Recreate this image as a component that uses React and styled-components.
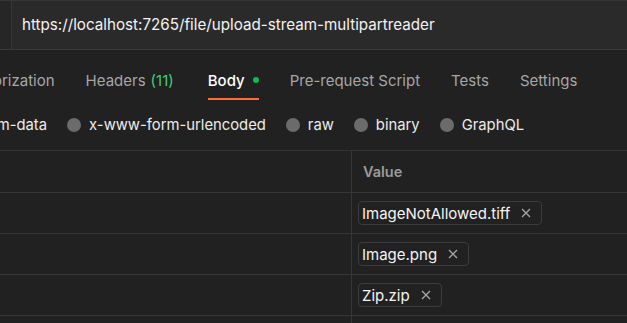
import React from 'react';
import styled, { createGlobalStyle } from 'styled-components';

const GlobalStyle = createGlobalStyle`
  body {
    margin: 0;
    background: #212121;
    font-family: Inter, "Noto Sans", sans-serif;
    overflow: hidden;
  }
`;

const Page = styled.div`
  width: 627px;
  height: 323px;
  overflow: hidden;
  background: #212121;
`;

const UrlBar = styled.div`
  display: flex;
  height: 48px;
  border-top: 1px solid #363636;
  border-bottom: 1px solid #3a3a3a;
  background: #2a2a2a;
`;

const UrlEdge = styled.div`
  width: 11px;
  border-right: 1px solid #363636;
  background: #262626;
`;

const UrlText = styled.div`
  display: flex;
  align-items: center;
  padding-left: 10px;
  font-size: 15.2px;
  color: #f2f2f2;
  padding-bottom: 1px;
`;

const Tabs = styled.div`
  display: flex;
  gap: 31px;
  height: 50px;
  margin-left: -40px;
  white-space: nowrap;
`;

const Tab = styled.div`
  display: flex;
  align-items: center;
  gap: 5px;
  height: 100%;
  font-size: 15px;
  color: ${p => (p.active ? '#ffffff' : '#a6a6a6')};
  font-weight: ${p => (p.active ? 500 : 400)};
  box-sizing: border-box;
  border-bottom: 2px solid ${p => (p.active ? '#ff6c37' : 'transparent')};
  padding-top: 12px;
  margin-left: ${p => (p.active ? '3px' : '0')};
`;

const Count = styled.span`
  color: #3ccf78;
`;

const Dot = styled.span`
  width: 6px;
  height: 6px;
  border-radius: 50%;
  background: #0cbb52;
  margin-left: 3px;
`;

const Radios = styled.div`
  display: flex;
  align-items: center;
  gap: 20px;
  height: 51px;
  margin-left: -45px;
  white-space: nowrap;
  border-bottom: 1px solid #353535;
  box-sizing: border-box;
  width: calc(100% + 45px);
`;

const Radio = styled.label`
  display: flex;
  align-items: center;
  gap: 8px;
  font-size: 14.8px;
  color: #ececec;
`;

const Circle = styled.span`
  width: 14px;
  height: 14px;
  border-radius: 50%;
  background: #6b6b6b;
`;

const Table = styled.div`
  display: grid;
  grid-template-columns: 352px 1fr;
`;

const Cell = styled.div`
  height: 41px;
  box-sizing: border-box;
  border-bottom: 1px solid #363636;
  border-right: ${p => (p.first ? '1px solid #363636' : 'none')};
  display: flex;
  align-items: center;
  padding-left: 6px;
`;

const HeadCell = styled(Cell)`
  height: 42px;
  padding-left: 11px;
  font-size: 14.5px;
  font-weight: 600;
  color: #9b9b9b;
`;

const Chip = styled.div`
  display: flex;
  align-items: center;
  gap: 11px;
  height: 24px;
  box-sizing: border-box;
  padding: 0 10px 0 3px;
  border: 1px solid #3b3b3b;
  border-radius: 4px;
  font-size: 15px;
  color: #f4f4f4;
`;

const CloseIcon = () => (
  <svg width="10" height="10" viewBox="0 0 10 10" fill="none" stroke="#a8a8a8" strokeWidth="1.3">
    <path d="M1 1L9 9M9 1L1 9" />
  </svg>
);

const files = ['ImageNotAllowed.tiff', 'Image.png', 'Zip.zip'];

export default function App() {
  return (
    <Page>
      <GlobalStyle />
      <UrlBar>
        <UrlEdge />
        <UrlText>https://localhost:7265/file/upload-stream-multipartreader</UrlText>
      </UrlBar>
      <Tabs>
        <Tab>Authorization</Tab>
        <Tab>Headers <Count>(11)</Count></Tab>
        <Tab active>Body<Dot /></Tab>
        <Tab>Pre-request Script</Tab>
        <Tab>Tests</Tab>
        <Tab>Settings</Tab>
      </Tabs>
      <Radios>
        <Radio><Circle />form-data</Radio>
        <Radio><Circle />x-www-form-urlencoded</Radio>
        <Radio><Circle />raw</Radio>
        <Radio><Circle />binary</Radio>
        <Radio><Circle />GraphQL</Radio>
      </Radios>
      <Table>
        <HeadCell first />
        <HeadCell>Value</HeadCell>
        {files.map(f => (
          <React.Fragment key={f}>
            <Cell first />
            <Cell>
              <Chip>{f}<CloseIcon /></Chip>
            </Cell>
          </React.Fragment>
        ))}
        <Cell first />
        <Cell />
      </Table>
    </Page>
  );
}
